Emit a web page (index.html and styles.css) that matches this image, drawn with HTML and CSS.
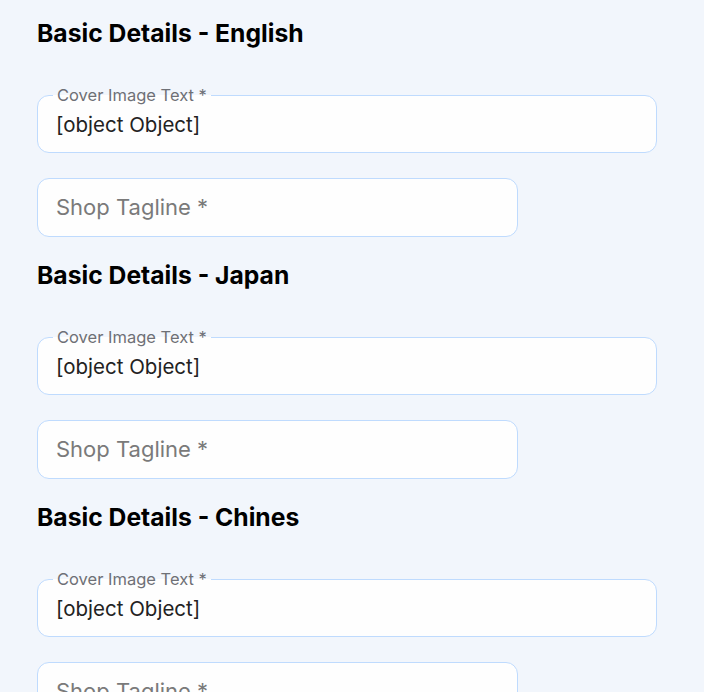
FILE: index.html
```html
<!DOCTYPE html>
<html lang="en">

<head>
    <meta charset="UTF-8">
    <meta name="viewport" content="width=device-width, initial-scale=1.0">
    <title>Shop Details</title>
    <link rel="stylesheet" href="styles.css">
</head>

<body>
    <div class="container">
        <div class="section">
            <h2>Basic Details - English</h2>
            <div class="field wide">
                <label class="field-label">Cover Image Text *</label>
                <input class="field-input" type="text" value="[object Object]">
            </div>
            <div class="field narrow">
                <input class="field-input" type="text" placeholder="Shop Tagline *">
            </div>
        </div>

        <div class="section">
            <h2>Basic Details - Japan</h2>
            <div class="field wide">
                <label class="field-label">Cover Image Text *</label>
                <input class="field-input" type="text" value="[object Object]">
            </div>
            <div class="field narrow">
                <input class="field-input" type="text" placeholder="Shop Tagline *">
            </div>
        </div>

        <div class="section">
            <h2>Basic Details - Chines</h2>
            <div class="field wide">
                <label class="field-label">Cover Image Text *</label>
                <input class="field-input" type="text" value="[object Object]">
            </div>
            <div class="field narrow">
                <input class="field-input" type="text" placeholder="Shop Tagline *">
            </div>
        </div>
    </div>
</body>

</html>
```

FILE: styles.css
```css
body {
    font-family: Inter, "Noto Sans", sans-serif;
    margin: 0;
    padding: 17px 0 0 37px;
    background-color: #f2f6fc;
    color: #000;
}

.container {
    width: 620px;
}

.section {
    margin-bottom: 22px;
}

h2 {
    margin: 0 0 46px;
    font-size: 24.7px;
    line-height: 32px;
    font-weight: 700;
}

.field {
    position: relative;
    box-sizing: border-box;
    height: 58px;
    border: 1px solid #bfdbfe;
    border-radius: 12px;
    background-color: #fefefe;
    display: flex;
    align-items: center;
}

.field + .field {
    margin-top: 25px;
}

.wide {
    width: 620px;
}

.narrow {
    width: 481px;
    height: 59px;
}

/* label sits on the top border, cutting a gap into it */
.field-label {
    position: absolute;
    left: 15px;
    top: -10px;
    padding: 0 4px;
    font-size: 16.5px;
    line-height: 18px;
    color: #6e7076;
    background: linear-gradient(to bottom, #f2f6fc 50%, #fefefe 50%);
}

.field-input {
    flex-grow: 1;
    border: none;
    outline: none;
    background: transparent;
    padding: 0 18px;
    font-family: inherit;
    font-size: 20.5px;
    color: #222;
}

.field-input::placeholder {
    font-size: 22px;
    color: #7a7a7a;
}
```
